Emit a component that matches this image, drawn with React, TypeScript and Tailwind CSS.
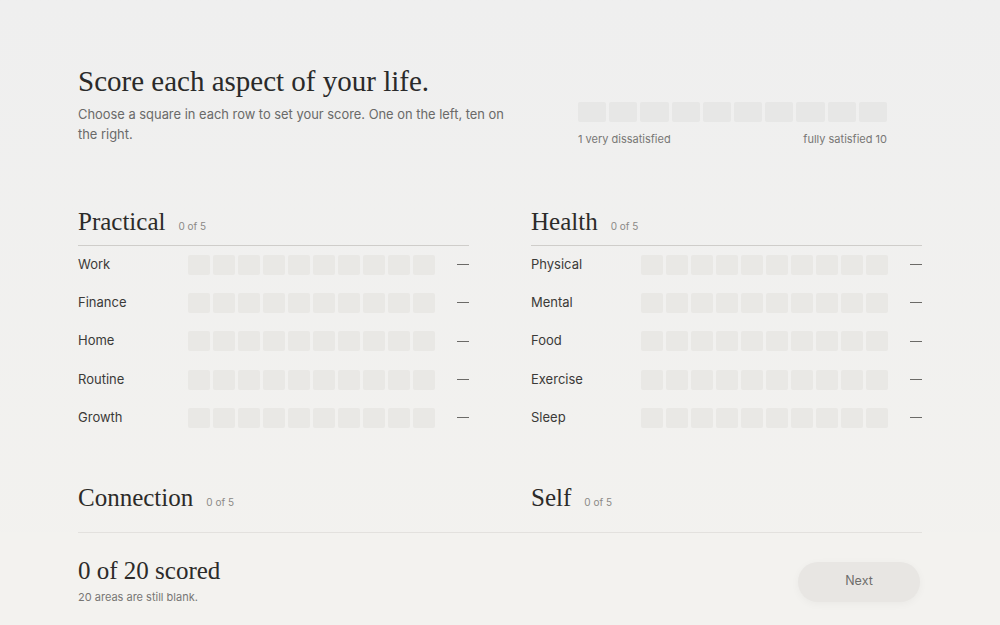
import React from "react"

const sans = { fontFamily: "Inter, 'Noto Sans', sans-serif" }
const serif = { fontFamily: "'Liberation Serif', 'DejaVu Serif', serif" }

const sections = [
  { name: "Practical", items: ["Work", "Finance", "Home", "Routine", "Growth"], open: true },
  { name: "Health", items: ["Physical", "Mental", "Food", "Exercise", "Sleep"], open: true },
  { name: "Connection", items: ["Family", "Friends", "Partner", "Community", "Play"], open: false },
  { name: "Self", items: ["Purpose", "Calm", "Joy", "Creativity", "Rest"], open: false },
]

const scale = Array.from({ length: 10 }, (_, i) => i + 1)

function ScoreRow({ label }: { label: string }) {
  return (
    <div className="flex h-[38.3px] items-center">
      <span className="w-[110px] text-[13px] text-[#3b3a38]" style={sans}>
        {label}
      </span>
      <div className="flex gap-[3px]">
        {scale.map((n) => (
          <button
            key={n}
            aria-label={`${label} ${n}`}
            className="h-[20px] w-[22px] rounded-[2px] bg-[#e9e8e5]"
          />
        ))}
      </div>
      <span className="ml-auto h-px w-[12px] bg-[#6b6a67]" />
    </div>
  )
}

function Section({ name, items, open }: { name: string; items: string[]; open: boolean }) {
  return (
    <section className="mb-[47px]">
      <div
        className={`flex items-baseline gap-[13px] pb-[9px] ${open ? "border-b border-[#cfcdca]" : ""}`}
      >
        <h2 className="text-[25px] leading-[28px] text-[#2c2b29]" style={serif}>
          {name}
        </h2>
        <span className="text-[10px] text-[#8a8986]" style={sans}>
          0 of {items.length}
        </span>
      </div>
      {open && items.map((item) => <ScoreRow key={item} label={item} />)}
    </section>
  )
}

export default function App() {
  return (
    <div className="relative h-[625px] overflow-hidden bg-gradient-to-b from-[#efefef] to-[#f3f2ef]">
      <main className="mx-auto w-[844px] pt-[64px]">
        {/* Intro and scale legend */}
        <header className="flex justify-between">
          <div className="w-[440px]">
            <h1 className="text-[29px] leading-[34px] text-[#2a2a2a]" style={serif}>
              Score each aspect of your life.
            </h1>
            <p className="mt-[7px] text-[12.9px] leading-[20px] text-[#6a6a69]" style={sans}>
              Choose a square in each row to set your score. One on the left, ten on the right.
            </p>
          </div>
          <div className="mr-[35px] mt-[38px] w-[309px]">
            <div className="flex gap-[3px]">
              {scale.map((n) => (
                <span key={n} className="h-[20px] flex-1 rounded-[2px] bg-[#e7e7e6]" />
              ))}
            </div>
            <div className="mt-[9px] flex justify-between text-[11px] text-[#787775]" style={sans}>
              <span>1 very dissatisfied</span>
              <span>fully satisfied 10</span>
            </div>
          </div>
        </header>

        <div className="mt-[60px] grid grid-cols-2 gap-x-[62px]">
          {sections.map((s) => (
            <Section key={s.name} name={s.name} items={s.items} open={s.open} />
          ))}
        </div>
      </main>

      {/* Progress footer */}
      <footer className="absolute inset-x-0 bottom-0 h-[93px] bg-[#f3f2ef]">
        <div className="mx-auto flex h-full w-[844px] items-center justify-between border-t border-[#e3e1de] pt-[5px]">
          <div>
            <div className="text-[25px] leading-[28px] text-[#2c2b29]" style={serif}>
              0 of 20 scored
            </div>
            <div className="mt-[4px] text-[11px] text-[#777674]" style={sans}>
              20 areas are still blank.
            </div>
          </div>
          <button
            className="mr-[2px] h-[40px] w-[122px] rounded-full bg-[#e8e6e3] text-[12.5px] text-[#6f6e6c] shadow-[0_2px_8px_rgba(0,0,0,0.04)]"
            style={sans}
          >
            Next
          </button>
        </div>
      </footer>
    </div>
  )
}
